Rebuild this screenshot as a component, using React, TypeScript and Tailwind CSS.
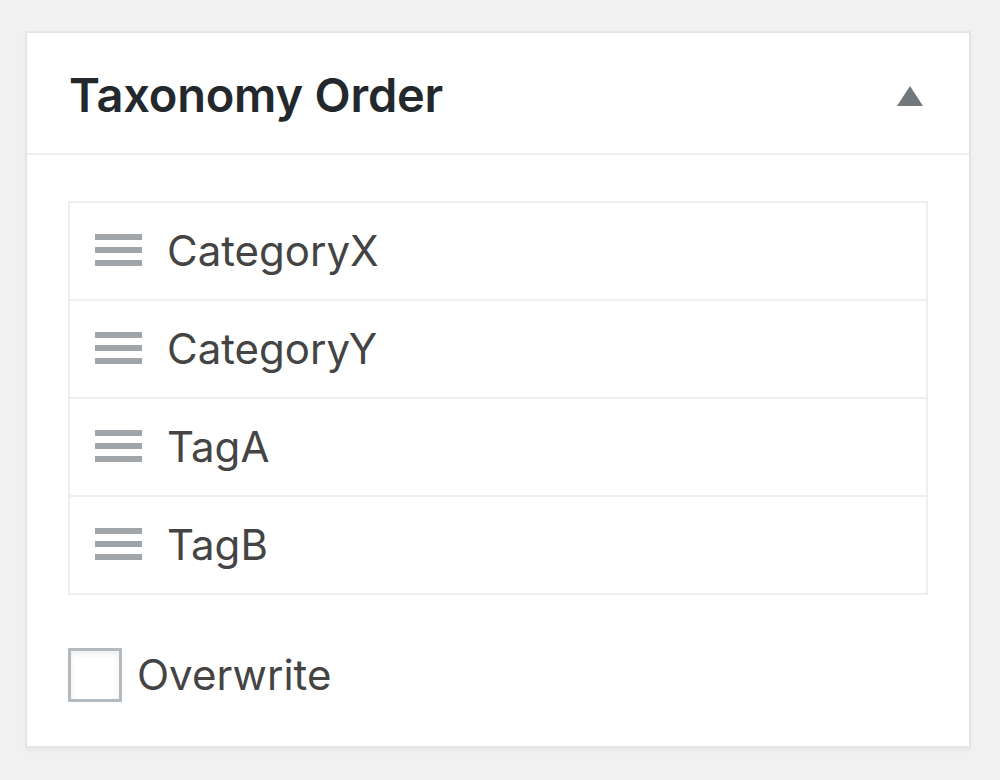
import React from "react";

function Handle() {
  return (
    <svg width="47" height="34" viewBox="0 0 47 34" className="shrink-0">
      <rect x="0" y="0" width="47" height="6" fill="#a0a5aa" />
      <rect x="0" y="13" width="47" height="6" fill="#a0a5aa" />
      <rect x="0" y="26" width="47" height="6" fill="#a0a5aa" />
    </svg>
  );
}

export default function App() {
  const items = ["CategoryX", "CategoryY", "TagA", "TagB"];
  return (
    <div
      className="min-h-screen bg-[#f1f1f1] pt-[31px] pl-[25px]"
      style={{ fontFamily: "Inter, 'Noto Sans', sans-serif" }}
    >
      <div className="w-[946px] border-2 border-[#e5e5e5] bg-white shadow-[0_3px_3px_rgba(0,0,0,0.04)]">
        <div className="flex h-[122px] items-center justify-between border-b-2 border-[#eeeeee] pl-[42px] pr-[46px]">
          <h2 className="mt-[2px] text-[47px] font-semibold leading-none tracking-[-0.2px] text-[#23282d]">
            Taxonomy Order
          </h2>
          <svg width="26" height="20" viewBox="0 0 26 20" className="mt-[6px]">
            <polygon points="13,0 26,20 0,20" fill="#72777c" />
          </svg>
        </div>
        <div className="px-[41px] pt-[46px] pb-[44px]">
          <div className="border-x-2 border-t-2 border-[#eeeeee]">
            {items.map((it) => (
              <div
                key={it}
                className="flex h-[98px] items-center gap-[25px] border-b-2 border-[#eeeeee] pl-[25px]"
              >
                <Handle />
                <span className="text-[42px] leading-none text-[#444444]">{it}</span>
              </div>
            ))}
          </div>
          <div className="mt-[53px] flex items-center gap-[15px]">
            <div className="h-[54px] w-[54px] border-[3px] border-[#b4b9be] bg-white shadow-[inset_0_3px_6px_rgba(0,0,0,0.07)]" />
            <span className="text-[42px] leading-none text-[#444444]">Overwrite</span>
          </div>
        </div>
      </div>
    </div>
  );
}
